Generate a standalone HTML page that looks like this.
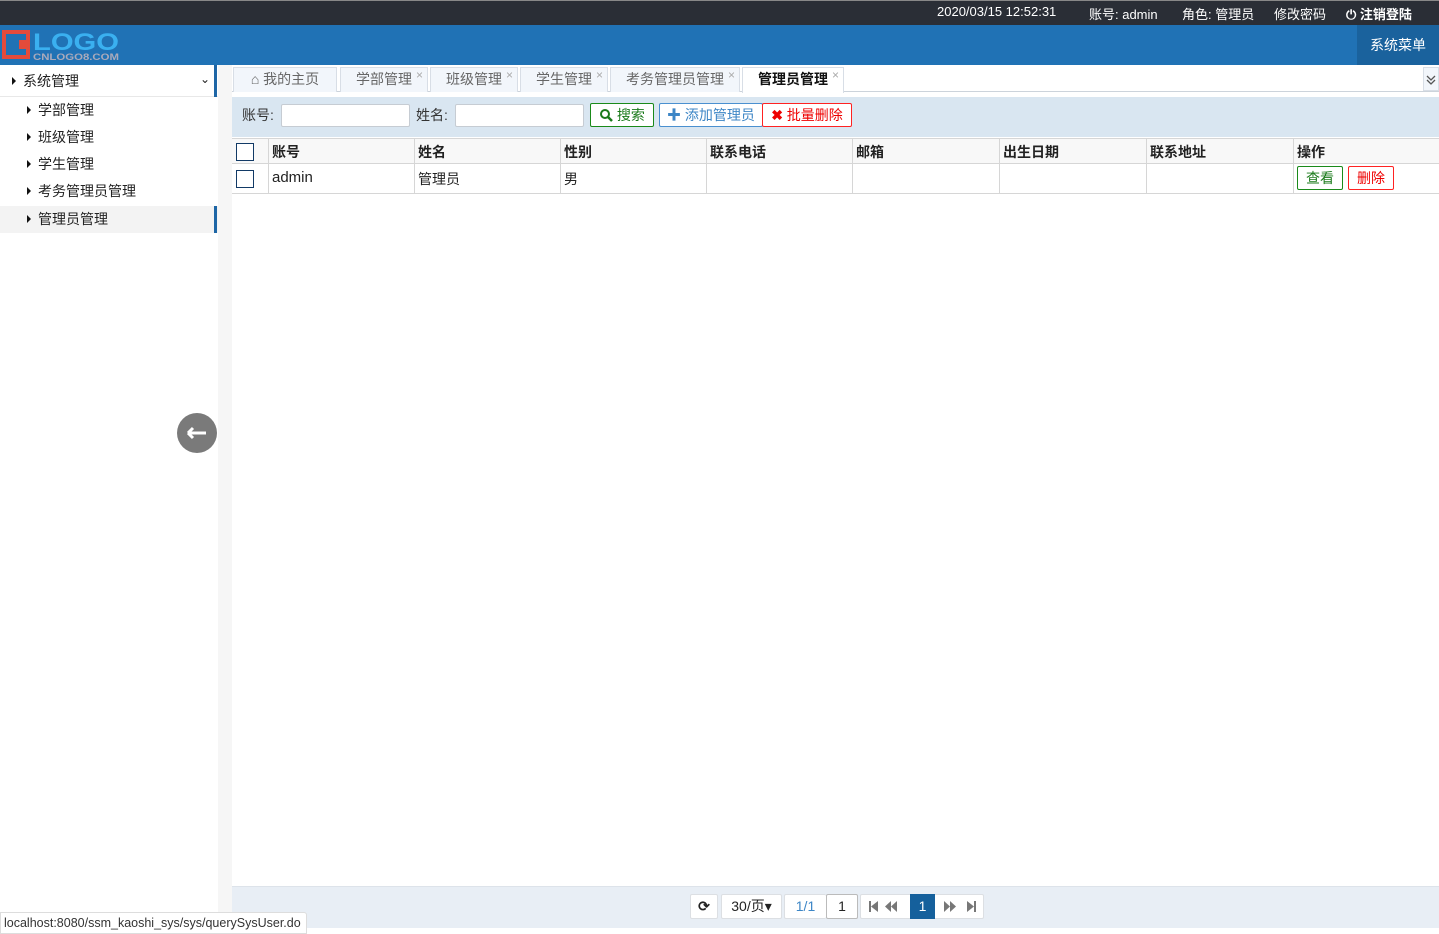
<!DOCTYPE html>
<html><head><meta charset="utf-8"><style>
*{margin:0;padding:0;box-sizing:border-box}
body{width:1439px;height:934px;position:relative;overflow:hidden;font-family:"Liberation Sans","Noto Sans CJK SC",sans-serif;font-size:13px;color:#222;background:#fff}
.abs{position:absolute}
.top{left:0;top:0;width:1439px;height:25px;background:#2a2e36;border-top:1px solid #888;color:#fff;font-size:13px}
.top span{position:absolute;top:3px}
.hdr{left:0;top:25px;width:1439px;height:40px;background:#2072b5}
.menu{right:0;top:25px;width:82px;height:40px;background:#1a629d;color:#fff;font-size:14px;line-height:40px;text-align:center}
.side{left:0;top:65px;width:218px;height:869px;background:#fff}
.gap{left:218px;top:65px;width:14px;height:869px;background:#f6f6f6}
.si{position:absolute;left:0;width:218px;height:27px;line-height:27px;font-size:14px;color:#222}
.tri{display:inline-block;width:0;height:0;border-top:4px solid transparent;border-bottom:4px solid transparent;border-left:4px solid #111;margin-right:7px;vertical-align:1px}
.tab{position:absolute;top:67px;height:25px;background:#f2f6fb;border:1px solid #d8dee6;border-bottom:none;color:#666;font-size:14px;line-height:23px;text-align:center}
.tab i{position:absolute;right:4px;top:-4px;font-style:normal;color:#aaa;font-size:12px}
.tb{left:232px;top:97px;width:1207px;height:40px;background:#d9e6f1}
.inp{position:absolute;top:104px;height:23px;background:#fff;border:1px solid #c6ccd3;border-radius:2px}
.btn{position:absolute;top:103px;height:24px;border:1px solid;border-radius:2px;font-size:14px;line-height:22px;text-align:center;background:#fff}
.th{left:232px;top:138px;width:1207px;height:26px;background:#f8f8f8;border-top:1px solid #d6d6d6;border-bottom:1px solid #d6d6d6}
.tr{left:232px;top:164px;width:1207px;height:30px;border-bottom:1px solid #d6d6d6}
.vl{position:absolute;top:138px;width:1px;height:56px;background:#d6d6d6}
.c{position:absolute;font-size:14px}
.cb{position:absolute;left:236px;width:18px;height:18px;border:1px solid #123a66;background:#fff}
.pg{left:232px;top:886px;width:1207px;height:42px;background:#e8eef5;border-top:1px solid #dde3ea}
.pb{position:absolute;top:894px;height:25px;background:#fff;border:1px solid #dcdfe3;border-radius:2px;text-align:center;line-height:23px;font-size:14px;color:#777}
</style></head><body>
<div class="abs top">
<span style="left:937px">2020/03/15 12:52:31</span>
<span style="left:1089px">账号: admin</span>
<span style="left:1182px">角色: 管理员</span>
<span style="left:1274px">修改密码</span>
<span style="left:1346px;font-weight:bold">⏻ 注销登陆</span>
</div>
<div class="abs hdr">
<svg width="125" height="40" style="position:absolute;left:0;top:0">
<rect x="2" y="5" width="28" height="29" fill="#e44b3b"/><rect x="6" y="9" width="20" height="21" fill="#2072b5"/><rect x="12" y="15" width="14" height="9" fill="#e44b3b"/><rect x="12" y="15" width="7" height="9" fill="#2072b5"/>
<text x="33" y="25" font-family="Liberation Sans" font-size="24" font-weight="bold" fill="#3ab0f0" textLength="86" lengthAdjust="spacingAndGlyphs">LOGO</text>
<text x="33" y="35" font-family="Liberation Sans" font-size="9" font-weight="bold" fill="#aab" textLength="86" lengthAdjust="spacingAndGlyphs">CNLOGO8.COM</text>
</svg>
</div>
<div class="abs menu">系统菜单</div>
<div class="abs side">
<div class="si" style="top:2px;padding-left:12px;border-bottom:1px solid #e8e8e8;height:30px;line-height:28px"><span class="tri"></span>系统管理<span style="position:absolute;right:8px;top:-2px;font-size:12px">⌄</span></div>
<div class="abs" style="left:214px;top:0;width:3px;height:32px;background:#1e66a6"></div>
<div class="si" style="top:32px;padding-left:27px"><span class="tri"></span>学部管理</div>
<div class="si" style="top:59px;padding-left:27px"><span class="tri"></span>班级管理</div>
<div class="si" style="top:86px;padding-left:27px"><span class="tri"></span>学生管理</div>
<div class="si" style="top:113px;padding-left:27px"><span class="tri"></span>考务管理员管理</div>
<div class="si" style="top:141px;padding-left:27px;background:#f3f3f3"><span class="tri"></span>管理员管理</div>
<div class="abs" style="left:214px;top:141px;width:3px;height:27px;background:#1e66a6"></div>
</div>
<div class="abs gap"></div>
<div class="abs" style="left:177px;top:413px;width:40px;height:40px;border-radius:50%;background:#7a7a7a"><svg width="40" height="40"><path d="M11 20H29M11 20L16 15M11 20L16 25" stroke="#fff" stroke-width="3" fill="none"/></svg></div>
<div class="abs" style="left:232px;top:91px;width:1207px;height:1px;background:#ccd3db"></div>
<div class="tab" style="left:233px;width:104px">⌂ 我的主页</div>
<div class="tab" style="left:340px;width:88px">学部管理<i>×</i></div>
<div class="tab" style="left:430px;width:88px">班级管理<i>×</i></div>
<div class="tab" style="left:520px;width:88px">学生管理<i>×</i></div>
<div class="tab" style="left:610px;width:130px">考务管理员管理<i>×</i></div>
<div class="tab" style="left:742px;width:102px;background:#fff;color:#111;font-weight:bold;height:26px">管理员管理<i style="font-weight:normal">×</i></div>
<div class="abs" style="left:1423px;top:67px;width:16px;height:24px;background:#f2f6fb;border:1px solid #d8dee6"><svg width="14" height="22"><path d="M3 8L7 12L11 8M3 12L7 16L11 12" stroke="#555" stroke-width="1.3" fill="none"/></svg></div>
<div class="abs tb"></div>
<div class="c" style="left:242px;top:105px;color:#333">账号:</div>
<div class="inp" style="left:281px;width:129px"></div>
<div class="c" style="left:416px;top:105px;color:#333">姓名:</div>
<div class="inp" style="left:455px;width:129px"></div>
<div class="btn" style="left:590px;width:64px;border-color:#1a8a1a;color:#1a7a1a"><svg width="14" height="14" style="vertical-align:-2px"><circle cx="6" cy="6" r="4" stroke="#1a7a1a" stroke-width="2" fill="none"/><path d="M9 9L13 13" stroke="#1a7a1a" stroke-width="2.5"/></svg> 搜索</div>
<div class="btn" style="left:659px;width:104px;border-color:#4a90d0;color:#3d86c6"><b>✚</b> 添加管理员</div>
<div class="btn" style="left:762px;width:90px;border-color:#f22;color:#e00"><b>✖</b> 批量删除</div>
<div class="abs th"></div><div class="abs tr"></div>
<div class="vl" style="left:268px"></div><div class="vl" style="left:414px"></div><div class="vl" style="left:560px"></div><div class="vl" style="left:706px"></div><div class="vl" style="left:852px"></div><div class="vl" style="left:999px"></div><div class="vl" style="left:1146px"></div><div class="vl" style="left:1293px"></div>
<div class="cb" style="top:143px"></div><div class="cb" style="top:170px"></div>
<div class="c" style="left:272px;top:142px;font-weight:bold">账号</div>
<div class="c" style="left:418px;top:142px;font-weight:bold">姓名</div>
<div class="c" style="left:564px;top:142px;font-weight:bold">性别</div>
<div class="c" style="left:710px;top:142px;font-weight:bold">联系电话</div>
<div class="c" style="left:856px;top:142px;font-weight:bold">邮箱</div>
<div class="c" style="left:1003px;top:142px;font-weight:bold">出生日期</div>
<div class="c" style="left:1150px;top:142px;font-weight:bold">联系地址</div>
<div class="c" style="left:1297px;top:142px;font-weight:bold">操作</div>
<div class="c" style="left:272px;top:169px;font-size:15px">admin</div>
<div class="c" style="left:418px;top:169px">管理员</div>
<div class="c" style="left:564px;top:169px">男</div>
<div class="btn" style="left:1297px;top:166px;width:46px;border-color:#1a8a1a;color:#1a7a1a">查看</div>
<div class="btn" style="left:1348px;top:166px;width:46px;border-color:#f22;color:#e00">删除</div>
<div class="abs pg"></div>
<div class="pb" style="left:690px;width:28px;color:#222;font-weight:bold">⟳</div>
<div class="pb" style="left:721px;width:61px;color:#222">30/页▾</div>
<div class="pb" style="left:784px;width:42px;color:#3d86c6;border-right:none">1/1</div>
<div class="pb" style="left:826px;width:32px;color:#222;border-color:#bbb">1</div>
<div class="pb" style="left:860px;width:124px"></div>
<svg class="abs" style="left:860px;top:894px" width="124" height="25">
<g fill="#777"><rect x="9" y="7" width="2" height="11"/><path d="M18 7L11 12.5L18 18Z"/>
<path d="M37 7L31 12.5L37 18Z"/><path d="M31 7L25 12.5L31 18Z"/>
<path d="M84 7L90 12.5L84 18Z"/><path d="M90 7L96 12.5L90 18Z"/>
<path d="M107 7L114 12.5L107 18Z"/><rect x="114" y="7" width="2" height="11"/></g></svg>
<div class="abs" style="left:910px;top:894px;width:25px;height:25px;background:#15609c;color:#fff;text-align:center;line-height:25px;font-size:14px">1</div>
<div class="abs" style="left:0;top:912px;width:307px;height:22px;background:#fff;border:1px solid #ddd;border-radius:0 3px 0 0;font-size:12.5px;color:#333;line-height:21px;padding-left:3px;white-space:nowrap;overflow:hidden">localhost:8080/ssm_kaoshi_sys/sys/querySysUser.do</div>
</body></html>
